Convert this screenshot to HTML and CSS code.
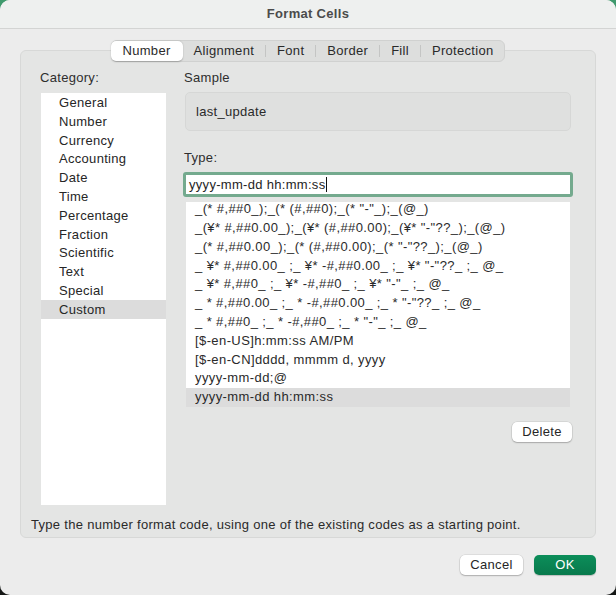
FILE: index.html
```html
<!DOCTYPE html>
<html>
<head>
<meta charset="utf-8">
<link rel="stylesheet" href="styles.css">
</head>
<body>
<div class="window">
  <div class="titlebar">Format Cells</div>
  <div class="main">
    <div class="tabs">
      <div class="tab selected">Number</div>
      <div class="tab">Alignment</div>
      <div class="sep"></div>
      <div class="tab">Font</div>
      <div class="sep"></div>
      <div class="tab">Border</div>
      <div class="sep"></div>
      <div class="tab">Fill</div>
      <div class="sep"></div>
      <div class="tab">Protection</div>
    </div>
    <div class="panel">
      <div class="cols">
        <div class="left">
          <div class="label">Category:</div>
          <div class="catlist">
            <div class="cat">General</div>
            <div class="cat">Number</div>
            <div class="cat">Currency</div>
            <div class="cat">Accounting</div>
            <div class="cat">Date</div>
            <div class="cat">Time</div>
            <div class="cat">Percentage</div>
            <div class="cat">Fraction</div>
            <div class="cat">Scientific</div>
            <div class="cat">Text</div>
            <div class="cat">Special</div>
            <div class="cat active">Custom</div>
          </div>
        </div>
        <div class="right">
          <div class="label">Sample</div>
          <div class="sample">last_update</div>
          <div class="label type-label">Type:</div>
          <div class="input"><span class="caret">yyyy-mm-dd hh:mm:ss</span></div>
          <div class="fmtlist">
            <div class="fmt">_(* #,##0_);_(* (#,##0);_(* "-"_);_(@_)</div>
            <div class="fmt">_(¥* #,##0.00_);_(¥* (#,##0.00);_(¥* "-"??_);_(@_)</div>
            <div class="fmt">_(* #,##0.00_);_(* (#,##0.00);_(* "-"??_);_(@_)</div>
            <div class="fmt">_ ¥* #,##0.00_ ;_ ¥* -#,##0.00_ ;_ ¥* "-"??_ ;_ @_</div>
            <div class="fmt">_ ¥* #,##0_ ;_ ¥* -#,##0_ ;_ ¥* "-"_ ;_ @_</div>
            <div class="fmt">_ * #,##0.00_ ;_ * -#,##0.00_ ;_ * "-"??_ ;_ @_</div>
            <div class="fmt">_ * #,##0_ ;_ * -#,##0_ ;_ * "-"_ ;_ @_</div>
            <div class="fmt">[$-en-US]h:mm:ss AM/PM</div>
            <div class="fmt">[$-en-CN]dddd, mmmm d, yyyy</div>
            <div class="fmt">yyyy-mm-dd;@</div>
            <div class="fmt active">yyyy-mm-dd hh:mm:ss</div>
          </div>
          <div class="delete-row"><div class="btn">Delete</div></div>
        </div>
      </div>
      <div class="hint">Type the number format code, using one of the existing codes as a starting point.</div>
    </div>
    <div class="footer">
      <div class="btn cancel">Cancel</div>
      <div class="btn ok">OK</div>
    </div>
  </div>
</div>
</body>
</html>
```
FILE: styles.css
```css
html, body {
  margin: 0;
  padding: 0;
}
body {
  width: 616px;
  height: 595px;
  background: linear-gradient(#3f9a6d 0%, #5d8f78 40%, #141615 100%);
  font-family: "Liberation Sans", Arial, sans-serif;
  font-size: 13px;
  letter-spacing: 0.3px;
  color: #262626;
  overflow: hidden;
}
.window {
  width: 616px;
  height: 595px;
  border-radius: 10px;
  background: #ececec;
  overflow: hidden;
  box-sizing: border-box;
}
.titlebar {
  height: 28px;
  line-height: 28px;
  text-align: center;
  font-weight: bold;
  color: #4b4b4b;
  background: #eef0ef;
  border-bottom: 1px solid #d3d4d3;
}
.main {
  padding: 11px 20px 0 20px;
}
.tabs {
  position: relative;
  z-index: 1;
  display: flex;
  align-items: center;
  width: max-content;
  margin: 0 auto -12px auto;
  height: 20px;
  background: #dddedd;
  border: 1px solid #d0d1d0;
  border-radius: 6px;
}
.tab {
  height: 20px;
  line-height: 20px;
  padding: 0 11px;
  color: #2a2a2a;
}
.tab.selected {
  background: #ffffff;
  border-radius: 5px;
  padding: 0 12px;
  box-shadow: 0 0.5px 1.5px rgba(0,0,0,0.25);
  margin-left: -1px;
}
.sep {
  width: 1px;
  height: 12px;
  background: #c4c5c4;
}
.panel {
  height: 488px;
  box-sizing: border-box;
  background: #e4e5e4;
  border: 1px solid #d7d8d7;
  border-radius: 6px;
  display: flex;
  flex-direction: column;
}
.cols {
  display: flex;
  padding: 19px 0 0 19px;
  gap: 17px;
}
.left {
  width: 127px;
  display: flex;
  flex-direction: column;
}
.label {
  height: 16px;
  line-height: 16px;
  color: #2e2e2e;
}
.catlist {
  margin-top: 7px;
  margin-left: 1px;
  width: 125px;
  height: 412px;
  background: #ffffff;
}
.cat {
  height: 18.8px;
  box-sizing: border-box;
  padding-top: 1px;
  line-height: 18px;
  padding-left: 18px;
}
.cat.active {
  background: #dcdcdc;
}
.right {
  width: 389px;
  display: flex;
  flex-direction: column;
}
.sample {
  margin-top: 6px;
  margin-left: 1px;
  width: 386px;
  height: 39px;
  box-sizing: border-box;
  background: #dfe0df;
  border: 1px solid #d6d7d6;
  border-radius: 5px;
  line-height: 37px;
  padding-left: 10px;
  color: #2a2a2a;
}
.type-label {
  margin-top: 19px;
}
.input {
  margin-top: 6px;
  margin-left: -1px;
  width: 390px;
  height: 25px;
  box-sizing: border-box;
  border: 3px solid #74aa8e;
  border-radius: 3px;
  background: #ffffff;
  line-height: 19px;
  padding-left: 3px;
  color: #1e1e1e;
}
.caret {
  border-right: 1px solid #111;
  padding-right: 1px;
}
.fmtlist {
  margin-top: 5px;
  margin-left: 2px;
  width: 384px;
  height: 205px;
  background: #ffffff;
  overflow: hidden;
  display: flex;
  flex-direction: column;
  justify-content: flex-end;
}
.fmt {
  flex: none;
  height: 18.8px;
  line-height: 18.8px;
  padding-left: 9px;
  white-space: nowrap;
  letter-spacing: 0.4px;
  color: #2a2a2a;
}
.fmt.active {
  background: #dcdcdc;
}
.delete-row {
  display: flex;
  justify-content: flex-end;
  margin-top: 15px;
  padding-right: 1px;
}
.btn {
  height: 20px;
  line-height: 20px;
  box-sizing: border-box;
  text-align: center;
  background: #ffffff;
  border-radius: 5px;
  box-shadow: 0 0 0 0.5px rgba(0,0,0,0.12), 0 1px 1.5px rgba(0,0,0,0.22);
  color: #262626;
}
.delete-row .btn {
  width: 60px;
}
.hint {
  margin-top: auto;
  padding: 0 0 4px 10px;
  height: 16px;
  line-height: 16px;
  color: #2a2a2a;
}
.footer {
  display: flex;
  justify-content: flex-end;
  gap: 11px;
  margin-top: 17px;
}
.cancel {
  width: 63px;
}
.ok {
  width: 62px;
  background: linear-gradient(#0c8e5a, #08794c);
  color: #ffffff;
  box-shadow: 0 1px 1px rgba(0,0,0,0.2);
}
```
